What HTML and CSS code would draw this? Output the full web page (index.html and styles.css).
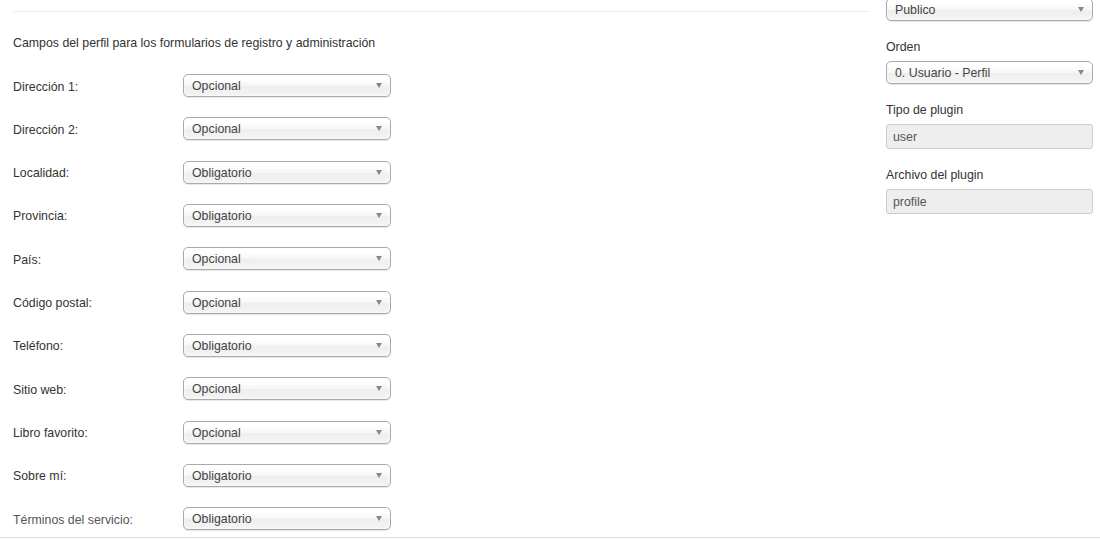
FILE: index.html
```html
<!DOCTYPE html>
<html lang="es">
<head>
<meta charset="utf-8">
<title>Perfil</title>
<link rel="stylesheet" href="styles.css">
</head>
<body>
<div class="page">
  <div class="main">
    <div class="rule"></div>
    <p class="intro">Campos del perfil para los formularios de registro y administración</p>
    <div class="rows">
      <div class="row"><span class="lbl">Dirección 1:</span><div class="chzn"><span>Opcional</span><i class="arrow"></i></div></div>
      <div class="row"><span class="lbl">Dirección 2:</span><div class="chzn"><span>Opcional</span><i class="arrow"></i></div></div>
      <div class="row"><span class="lbl">Localidad:</span><div class="chzn"><span>Obligatorio</span><i class="arrow"></i></div></div>
      <div class="row"><span class="lbl">Provincia:</span><div class="chzn"><span>Obligatorio</span><i class="arrow"></i></div></div>
      <div class="row"><span class="lbl">País:</span><div class="chzn"><span>Opcional</span><i class="arrow"></i></div></div>
      <div class="row"><span class="lbl">Código postal:</span><div class="chzn"><span>Opcional</span><i class="arrow"></i></div></div>
      <div class="row"><span class="lbl">Teléfono:</span><div class="chzn"><span>Obligatorio</span><i class="arrow"></i></div></div>
      <div class="row"><span class="lbl">Sitio web:</span><div class="chzn"><span>Opcional</span><i class="arrow"></i></div></div>
      <div class="row"><span class="lbl">Libro favorito:</span><div class="chzn"><span>Opcional</span><i class="arrow"></i></div></div>
      <div class="row"><span class="lbl">Sobre mí:</span><div class="chzn"><span>Obligatorio</span><i class="arrow"></i></div></div>
      <div class="row"><span class="lbl lbl-muted">Términos del servicio:</span><div class="chzn"><span>Obligatorio</span><i class="arrow"></i></div></div>
    </div>
  </div>
  <div class="side">
    <div class="chzn chzn-top"><span>Publico</span><i class="arrow"></i></div>
    <div class="side-label">Orden</div>
    <div class="chzn"><span>0. Usuario - Perfil</span><i class="arrow"></i></div>
    <div class="side-label">Tipo de plugin</div>
    <div class="ro">user</div>
    <div class="side-label">Archivo del plugin</div>
    <div class="ro">profile</div>
  </div>
</div>
</body>
</html>
```
FILE: styles.css
```css
html, body {
  margin: 0;
  padding: 0;
  background: #fff;
}
body {
  font-family: "Liberation Sans", Arial, sans-serif;
  font-size: 12.35px;
  color: #333;
  overflow: hidden;
}
.page {
  display: flex;
  align-items: flex-start;
  border-bottom: 1px solid #ddd;
  padding-bottom: 7px;
}
.main {
  margin-left: 13px;
  width: 857px;
}
.rule {
  margin-top: 11px;
  border-top: 1px solid #eee;
}
.intro {
  margin: 22px 0 0;
  line-height: 18px;
}
.rows {
  margin-top: 22px;
  display: flex;
  flex-direction: column;
  gap: 20.33px;
}
.row {
  display: flex;
  align-items: center;
  height: 23px;
}
.lbl {
  width: 170px;
  flex: none;
  line-height: 18px;
  padding-top: 2px;
}
.lbl-muted {
  color: #555;
}
.chzn {
  position: relative;
  box-sizing: border-box;
  width: 208px;
  height: 23px;
  border: 1px solid #aaa;
  border-radius: 5px;
  background: linear-gradient(#fff 20%, #f6f6f6 50%, #eee 52%, #f4f4f4 100%);
  box-shadow: 0 0 3px #fff inset, 0 1px 1px rgba(0, 0, 0, 0.1);
  color: #444;
  line-height: 21px;
  padding-left: 8px;
}
.chzn span {
  display: block;
  padding-top: 1px;
}
.arrow {
  position: absolute;
  right: 8px;
  top: 8px;
  width: 0;
  height: 0;
  border-left: 3.5px solid transparent;
  border-right: 3.5px solid transparent;
  border-top: 5px solid #888;
}
.side {
  margin-left: 16px;
  width: 207px;
}
.chzn-top {
  margin-top: -2px;
}
.side .chzn {
  width: 207px;
}
.side-label {
  line-height: 18px;
  margin-top: 17px;
  margin-bottom: 5px;
}
.ro {
  box-sizing: border-box;
  height: 25px;
  border: 1px solid #ccc;
  border-radius: 3px;
  background: #eee;
  color: #555;
  line-height: 23px;
  padding-left: 6px;
  padding-top: 1px;
}
```
